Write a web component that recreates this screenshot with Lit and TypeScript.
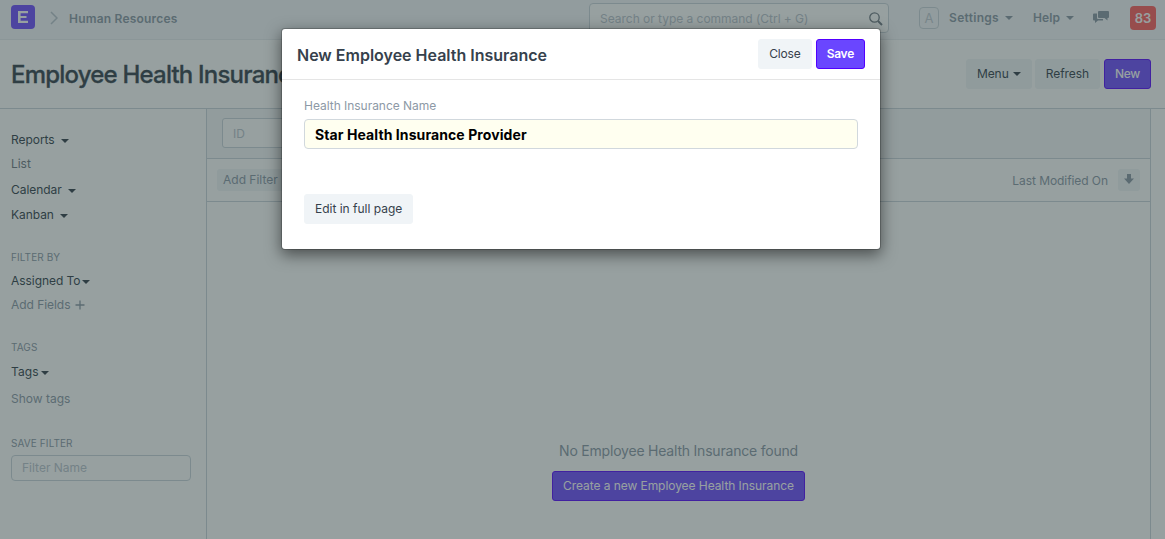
import { LitElement, html, css } from "lit";
import { customElement } from "lit/decorators.js";

const caret = html`<svg class="caret" width="8" height="4" viewBox="0 0 8 4"><path d="M0 0H8L4 4Z" fill="currentColor"/></svg>`;

@customElement("list-sidebar")
class ListSidebar extends LitElement {
  static styles = css`
    :host { display: block; box-sizing: border-box; width: 206px; padding: 22px 15px 0 11px; font-size: 12px; line-height: 18px; color: #2e3b47; letter-spacing: -0.05px; }
    .item { display: flex; align-items: center; }
    .caret { margin: 2px 0 0 6px; }
    .tight .caret { margin-left: 2px; }
    .list { color: #6c7680; margin-top: 6px; }
    .cal { margin-top: 8px; }
    .kan { margin-top: 7px; }
    .head { font-size: 10px; color: #8795a3; line-height: 14px; letter-spacing: 0.1px; }
    .filter { margin-top: 26px; }
    .assigned { margin-top: 8px; }
    .muted { color: #8795a3; margin-top: 6px; }
    .plus { margin-left: 5px; }
    .tags { margin-top: 26px; }
    .tag { margin-top: 9px; letter-spacing: 0.1px; }
    .show { color: #8795a3; margin-top: 9px; letter-spacing: 0; }
    .save { margin-top: 28px; }
    .input { box-sizing: border-box; height: 26px; width: 180px; margin-top: 5px; border: 1px solid #c9d3da; border-radius: 4px; padding: 3px 10px; color: #b8c2cc; letter-spacing: 0; }
  `;
  render() {
    return html`
      <div class="item">Reports ${caret}</div>
      <div class="item list">List</div>
      <div class="item cal">Calendar ${caret}</div>
      <div class="item kan">Kanban ${caret}</div>
      <div class="head filter">FILTER BY</div>
      <div class="item tight assigned">Assigned To ${caret}</div>
      <div class="item muted">Add Fields <svg class="plus" width="10" height="10" viewBox="0 0 10 10"><path d="M5 .5V9.5M.5 5H9.5" stroke="currentColor" stroke-width="1.3"/></svg></div>
      <div class="head tags">TAGS</div>
      <div class="item tight tag">Tags ${caret}</div>
      <div class="item show">Show tags</div>
      <div class="head save">SAVE FILTER</div>
      <div class="input">Filter Name</div>`;
  }
}

@customElement("quick-entry")
class QuickEntry extends LitElement {
  static styles = css`
    :host { display: block; box-sizing: border-box; width: 600px; height: 222px; background: #fff; background-clip: padding-box; border: 1px solid rgba(0,0,0,.2); border-radius: 4px; box-shadow: 0 5px 15px rgba(0,0,0,.5); font-size: 12px; color: #36414c; }
    .header { display: flex; align-items: center; height: 50px; padding: 0 15px; border-bottom: 1px solid #e5e5e5; }
    .title { flex: 1; font-size: 16px; font-weight: 600; padding-top: 2px; }
    .btn { box-sizing: border-box; height: 30px; line-height: 28px; padding: 0 10px; border: 1px solid #f0f4f7; border-radius: 3px; background: #f0f4f7; letter-spacing: -0.01px; }
    .close { letter-spacing: -0.15px; }
    .primary { margin-left: 4px; color: #fff; font-weight: 600; background: #6a46ff; border-color: #5200ff; letter-spacing: -0.27px; }
    .body { padding: 17px 22px 0; display: flex; flex-direction: column; align-items: flex-start; }
    .label { color: #8d99a6; line-height: 18px; letter-spacing: -0.03px; }
    .input { box-sizing: border-box; width: 554px; height: 30px; margin-top: 4px; border: 1px solid #d1d8dd; border-radius: 4px; background: #fffff0; color: #000; padding: 0 10px; line-height: 29px; font-size: 14px; font-weight: 700; letter-spacing: 0.09px; }
    .full { margin-top: 45px; }
  `;
  render() {
    return html`
      <div class="header"><div class="title">New Employee Health Insurance</div><div class="btn close">Close</div><div class="btn primary">Save</div></div>
      <div class="body">
        <div class="label">Health Insurance Name</div>
        <div class="input">Star Health Insurance Provider</div>
        <div class="btn full">Edit in full page</div>
      </div>`;
  }
}

@customElement("app-root")
class AppRoot extends LitElement {
  static styles = css`
    :host { display: block; position: relative; width: 1165px; height: 539px; overflow: hidden; background: #fff; font-family: Inter, sans-serif; font-size: 12px; color: #2e3b47; }
    .nav { box-sizing: border-box; height: 40px; display: flex; background: #f5f7fa; border-bottom: 1px solid #e6ebef; color: #8795a3; font-weight: 600; padding: 0 9px 0 11px; }
    .logo { width: 24px; height: 24px; margin-top: 5px; }
    .chev { margin: 11px 0 0 15px; width: 8px; height: 14px; }
    .crumb { margin: 11px 0 0 11px; line-height: 16px; flex: 1; letter-spacing: 0.2px; }
    .search { box-sizing: border-box; width: 300px; height: 30px; margin-top: 3px; border: 1px solid #c9d3da; border-radius: 4px; background: #fff; display: flex; justify-content: space-between; padding: 0 5px 0 10px; font-weight: 400; line-height: 29px; color: #b8c2cc; letter-spacing: -0.03px; }
    .glass { margin-top: 8px; color: #6c7680; }
    .avatar { box-sizing: border-box; width: 20px; height: 22px; margin: 7px 0 0 30px; border: 1px solid #c9d3da; border-radius: 4px; text-align: center; line-height: 21px; font-weight: 400; font-size: 13px; color: #c0c9d2; }
    .menu { display: flex; align-items: center; height: 16px; margin-top: 9px; letter-spacing: 0.28px; }
    .menu .caret { margin: 2px 0 0 6px; }
    .settings { margin-left: 10px; }
    .help { margin-left: 20px; letter-spacing: 0.1px; }
    .chat { margin: 10px 0 0 19px; }
    .badge { width: 26px; height: 24px; margin: 6px 0 0 21px; border-radius: 4px; background: #ff5858; color: #fff; text-align: center; line-height: 24px; font-size: 13px; }
    .pagehead { box-sizing: border-box; height: 69px; border-bottom: 1px solid #c9d3da; padding: 0 14px 0 11px; display: flex; align-items: center; gap: 3px; }
    .pagetitle { flex: 1; font-size: 24px; font-weight: 500; letter-spacing: -0.8px; -webkit-text-stroke: 0.3px currentColor; }
    .btn { box-sizing: border-box; height: 30px; line-height: 28px; padding: 0 10px; border: 1px solid #f0f4f7; border-radius: 3px; background: #f0f4f7; letter-spacing: -0.06px; display: flex; align-items: center; }
    .btn .caret { margin-left: 4px; }
    .primary { background: #6a46ff; border-color: #5200ff; color: #fff; }
    .new { font-weight: 500; margin-left: 1px; letter-spacing: -0.3px; }
    .page { display: flex; height: 430px; }
    .main { box-sizing: border-box; width: 945px; border: 1px solid #c9d3da; border-width: 0 1px; display: flex; flex-direction: column; }
    .fields { box-sizing: border-box; height: 50px; background: #f4f6f9; border-bottom: 1px solid #c9d3da; padding: 9px 15px; }
    .id { box-sizing: border-box; width: 140px; height: 30px; border: 1px solid #c9d3da; border-radius: 3px; background: #fff; color: #b8c2cc; padding: 0 10px; line-height: 29px; }
    .tools { box-sizing: border-box; height: 43px; border-bottom: 1px solid #c9d3da; padding: 0 10px; display: flex; align-items: center; justify-content: space-between; color: #8795a3; letter-spacing: 0; }
    .pill { height: 22px; line-height: 22px; border-radius: 3px; padding: 0 6px; background: #f0f4f7; }
    .sort { display: flex; align-items: center; gap: 10px; letter-spacing: -0.07px; }
    .arrow { width: 22px; height: 22px; background: #f0f4f7; border-radius: 3px; }
    .empty { display: flex; flex-direction: column; align-items: center; padding-top: 239px; color: #8795a3; }
    .msg { font-size: 14px; line-height: 20px; margin-bottom: 10px; letter-spacing: -0.21px; }
    .backdrop { position: absolute; inset: 0; background: #304142; opacity: .5; }
    quick-entry { position: absolute; left: 281px; top: 28px; }
  `;
  render() {
    return html`
      <div class="nav">
        <svg class="logo" viewBox="0 0 24 24"><rect width="24" height="24" rx="4" fill="#6a46ff"/><path d="M7 6H17V8.2H9.6V10.9H15.5V13H9.6V15.8H17V18H7Z" fill="#fff"/></svg>
        <svg class="chev" viewBox="0 0 8 14"><path d="M1 1L7 7L1 13" fill="none" stroke="#b8c2cc" stroke-width="1.5"/></svg>
        <div class="crumb">Human Resources</div>
        <div class="search">Search or type a command (Ctrl + G)
          <svg class="glass" width="14" height="14" viewBox="0 0 14 14"><circle cx="5.5" cy="5.5" r="4.7" fill="none" stroke="currentColor" stroke-width="1.3"/><path d="M9 9L13 13" stroke="currentColor" stroke-width="2"/></svg>
        </div>
        <div class="avatar">A</div>
        <div class="menu settings">Settings ${caret}</div>
        <div class="menu help">Help ${caret}</div>
        <svg class="chat" width="16" height="14" viewBox="0 0 16 14"><path d="M6 1H15Q16 1 16 2V7Q16 8 15 8H14.5V10.5L11.5 8H6Q5 8 5 7V2Q5 1 6 1Z" fill="currentColor"/><path d="M4 3.5H1Q0 3.5 0 4.5V9.5Q0 10.5 1 10.5H2V13L5 10.5H10V9H5Q4 9 4 8Z" fill="currentColor"/></svg>
        <div class="badge">83</div>
      </div>
      <div class="pagehead">
        <div class="pagetitle">Employee Health Insurance</div>
        <div class="btn">Menu ${caret}</div><div class="btn">Refresh</div><div class="btn primary new">New</div>
      </div>
      <div class="page">
        <list-sidebar></list-sidebar>
        <div class="main">
          <div class="fields"><div class="id">ID</div></div>
          <div class="tools">
            <div class="pill">Add Filter</div>
            <div class="sort">Last Modified On
              <svg class="arrow" viewBox="0 0 22 22"><path d="M9 5H13V9.5H16L11 15L6 9.5H9Z" fill="#8795a3"/></svg>
            </div>
          </div>
          <div class="empty">
            <div class="msg">No Employee Health Insurance found</div>
            <div class="btn primary">Create a new Employee Health Insurance</div>
          </div>
        </div>
      </div>
      <div class="backdrop"></div>
      <quick-entry></quick-entry>`;
  }
}
